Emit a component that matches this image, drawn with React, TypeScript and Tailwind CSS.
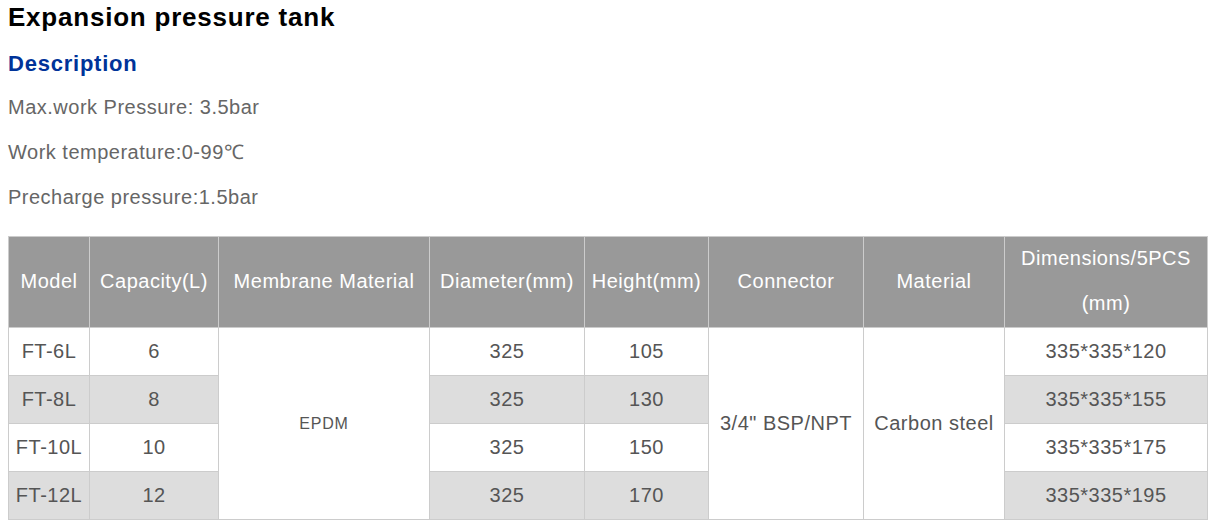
import React from "react";

const font = { fontFamily: '"Liberation Sans", Arial, sans-serif' };

type Row = { model: string; cap: string; dia: string; h: string; dim: string; stripe: boolean };

const rows: Row[] = [
  { model: "FT-6L", cap: "6", dia: "325", h: "105", dim: "335*335*120", stripe: false },
  { model: "FT-8L", cap: "8", dia: "325", h: "130", dim: "335*335*155", stripe: true },
  { model: "FT-10L", cap: "10", dia: "325", h: "150", dim: "335*335*175", stripe: false },
  { model: "FT-12L", cap: "12", dia: "325", h: "170", dim: "335*335*195", stripe: true },
];

function H({ children }: { children: React.ReactNode }) {
  return (
    <div className="flex items-center justify-center bg-[#999999] pb-[2px] text-center text-white text-[20px] leading-[45px] tracking-[0.025em]">
      {children}
    </div>
  );
}

function C({ children, stripe }: { children: React.ReactNode; stripe: boolean }) {
  return (
    <div
      className={
        stripe
          ? "flex items-center justify-center bg-[#dddddd] pb-[2px] text-center text-[#555555] text-[20px] tracking-[0.025em]"
          : "flex items-center justify-center bg-white pb-[2px] text-center text-[#555555] text-[20px] tracking-[0.025em]"
      }
    >
      {children}
    </div>
  );
}

export default function App() {
  return (
    <div className="min-h-[525px] w-[1216px] bg-white pl-2" style={font}>
      <h1 className="h-[35px] text-[26px] font-bold leading-[35px] tracking-[0.03em] text-black">
        Expansion pressure tank
      </h1>
      <h2 className="mt-[11px] h-[35px] text-[22px] font-bold leading-[35px] tracking-[0.035em] text-[#003399]">
        Description
      </h2>
      <div className="mt-[4px] flex flex-col text-[20px] leading-[45px] tracking-[0.025em] text-[#666666]">
        <p className="h-[45px]">Max.work Pressure: 3.5bar</p>
        <p className="h-[45px]">Work temperature:0-99℃</p>
        <p className="h-[45px]">Precharge pressure:1.5bar</p>
      </div>
      <div className="mt-[16px] grid w-[1200px] grid-cols-[80px_128px_210px_154px_123px_154px_140px_202px] grid-rows-[90px_47px_47px_47px_47px] gap-px bg-[#cccccc] p-px">
        <H>Model</H>
        <H>Capacity(L)</H>
        <H>Membrane Material</H>
        <H>Diameter(mm)</H>
        <H>Height(mm)</H>
        <H>Connector</H>
        <H>Material</H>
        <H>
          Dimensions/5PCS
          <br />
          (mm)
        </H>

        <C stripe={false}>{rows[0].model}</C>
        <C stripe={false}>{rows[0].cap}</C>
        <div className="row-span-4 flex items-center justify-center bg-white text-[16px] tracking-[0.05em] text-[#555555]">
          EPDM
        </div>
        <C stripe={false}>{rows[0].dia}</C>
        <C stripe={false}>{rows[0].h}</C>
        <div className="row-span-4 flex items-center justify-center bg-white pb-[2px] text-[20px] tracking-[0.025em] text-[#555555]">
          3/4" BSP/NPT
        </div>
        <div className="row-span-4 flex items-center justify-center bg-white pb-[2px] text-[20px] tracking-[0.025em] text-[#555555]">
          Carbon steel
        </div>
        <C stripe={false}>{rows[0].dim}</C>

        {rows.slice(1).map((r) => (
          <React.Fragment key={r.model}>
            <C stripe={r.stripe}>{r.model}</C>
            <C stripe={r.stripe}>{r.cap}</C>
            <C stripe={r.stripe}>{r.dia}</C>
            <C stripe={r.stripe}>{r.h}</C>
            <C stripe={r.stripe}>{r.dim}</C>
          </React.Fragment>
        ))}
      </div>
    </div>
  );
}
